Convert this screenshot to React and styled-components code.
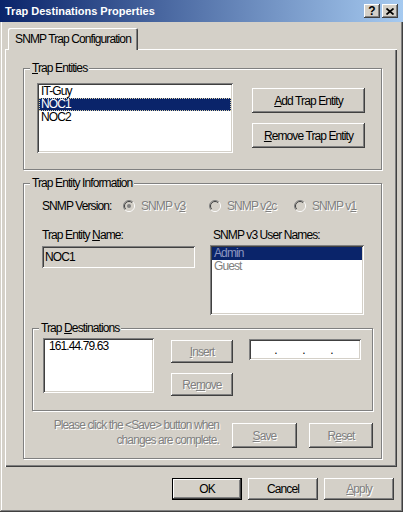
import React from 'react'
import styled, { createGlobalStyle, css } from 'styled-components'

const FACE = '#d4d0c8'

const GlobalStyle = createGlobalStyle`
  html, body {
    margin: 0;
    padding: 0;
    background: ${FACE};
  }
  body {
    font-family: "Liberation Sans", Arial, sans-serif;
    font-size: 12px;
    letter-spacing: -0.9px;
    line-height: 14px;
    white-space: nowrap;
    color: #000;
  }
`

//============ classic 3d edges
const raised = css`
  box-shadow: inset -1px -1px #404040, inset 1px 1px #fff,
    inset -2px -2px #808080, inset 2px 2px ${FACE};
`
const sunken = css`
  box-shadow: inset 1px 1px #808080, inset -1px -1px #fff,
    inset 2px 2px #404040, inset -2px -2px ${FACE};
`
const disabledText = css`
  color: #808080;
  text-shadow: 1px 1px #fff;
`

function Radio({ checked, children }) {
  return (
    <RadioItem>
      <svg width="12" height="12" viewBox="0 0 12 12">
        <circle cx="6" cy="6" r="5" fill={FACE} />
        <path d="M2.1 9.9 A5.5 5.5 0 0 1 9.9 2.1" stroke="#808080" fill="none" />
        <path d="M9.9 2.1 A5.5 5.5 0 0 1 2.1 9.9" stroke="#fff" fill="none" />
        <path d="M2.8 9.2 A4.5 4.5 0 0 1 9.2 2.8" stroke="#404040" fill="none" />
        <path d="M9.2 2.8 A4.5 4.5 0 0 1 2.8 9.2" stroke={FACE} fill="none" />
        {checked && <circle cx="6" cy="6" r="2" fill="#808080" />}
      </svg>
      <span>{children}</span>
    </RadioItem>
  )
}

function App() {
  return (
    <>
      <GlobalStyle />
      <Window>
        <TitleBar>
          <Title>Trap Destinations Properties</Title>
          <CaptionButton>?</CaptionButton>
          <CaptionButton $gap={2}>
            <svg width="8" height="7" viewBox="0 0 8 7">
              <path d="M0.5 0.5 L7.5 6.5 M7.5 0.5 L0.5 6.5" stroke="#000" strokeWidth="1.7" />
            </svg>
          </CaptionButton>
        </TitleBar>

        <Body>
          <TabStrip>
            <Tab>SNMP Trap Configuration</Tab>
          </TabStrip>
          <Panel>
            <Group>
              <GroupTitle><u>T</u>rap Entities</GroupTitle>
              <EntitiesRow>
                <ListBox $w={196} $h={70}>
                  <ListItem>IT-Guy</ListItem>
                  <ListItem $selected $focus>NOC1</ListItem>
                  <ListItem>NOC2</ListItem>
                </ListBox>
                <ButtonColumn $left={19} $top={5}>
                  <Button $w={113} $h={25}><u>A</u>dd Trap Entity</Button>
                  <Button $w={113} $h={25}><u>R</u>emove Trap Entity</Button>
                </ButtonColumn>
              </EntitiesRow>
            </Group>

            <Group $top={13}>
              <GroupTitle>Trap Entity Information</GroupTitle>
              <VersionRow>
                <span>SNMP Version:</span>
                <Radio checked>SNMP v<u>3</u></Radio>
                <Radio>SNMP v<u>2</u>c</Radio>
                <Radio>SNMP v<u>1</u></Radio>
              </VersionRow>

              <FieldsRow>
                <Column $w={153}>
                  <span>Trap Entity <u>N</u>ame:</span>
                  <TextField>NOC1</TextField>
                </Column>
                <Column $w={154}>
                  <FieldLabel>SNMP v3 User Names:</FieldLabel>
                  <ListBox $w={154} $h={70} $top={3}>
                    <ListItem $selected $dim>Admin</ListItem>
                    <ListItem $dim>Guest</ListItem>
                  </ListBox>
                </Column>
              </FieldsRow>

              <Group $top={13} $side={8}>
                <GroupTitle>Trap <u>D</u>estinations</GroupTitle>
                <DestRow>
                  <ListBox $w={111} $h={55}>
                    <ListItem $pad={4}>161.44.79.63</ListItem>
                  </ListBox>
                  <ButtonColumn $left={17} $top={2}>
                    <Button $w={62} $h={23} disabled><u>I</u>nsert</Button>
                    <Button $w={62} $h={23} disabled>Re<u>m</u>ove</Button>
                  </ButtonColumn>
                  <IpField>
                    <Dot>.</Dot>
                    <Dot>.</Dot>
                    <Dot>.</Dot>
                  </IpField>
                </DestRow>
              </Group>

              <SaveRow>
                <Note>
                  Please click the &lt;Save&gt; button when<br />
                  changes are complete.
                </Note>
                <Button $w={65} $h={25} disabled><u>S</u>ave</Button>
                <Button $w={64} $h={25} disabled $left={12}>R<u>e</u>set</Button>
              </SaveRow>
            </Group>
          </Panel>

          <Footer>
            <Button $w={70} $h={22} $default>OK</Button>
            <Button $w={70} $h={22}>Cancel</Button>
            <Button $w={70} $h={22} disabled><u>A</u>pply</Button>
          </Footer>
        </Body>
      </Window>
    </>
  )
}

export default App

//============ window frame

const Window = styled.div`
  width: 403px;
  height: 512px;
  box-sizing: border-box;
  background: ${FACE};
  display: flex;
  flex-direction: column;
  box-shadow: inset -1px -1px #404040, inset 1px 1px ${FACE},
    inset -2px -2px #808080, inset 2px 2px #fff;
`

const TitleBar = styled.div`
  height: 22px;
  flex-shrink: 0;
  display: flex;
  align-items: center;
  padding: 0 5px;
  background: linear-gradient(to right, #0a246a, #a6caf0);
  color: #fff;
  font-size: 11px;
  font-weight: bold;
  letter-spacing: 0;
`

const Title = styled.div`
  flex: 1;
`

const CaptionButton = styled.div`
  width: 16px;
  height: 14px;
  margin-left: ${p => p.$gap || 0}px;
  display: flex;
  align-items: center;
  justify-content: center;
  background: ${FACE};
  color: #000;
  font-size: 12px;
  font-weight: bold;
  letter-spacing: 0;
  ${raised}
`

const Body = styled.div`
  flex: 1;
  display: flex;
  flex-direction: column;
  padding: 6px 6px 0 5px;
`

const TabStrip = styled.div`
  display: flex;
  height: 21px;
  padding-left: 3px;
  position: relative;
  z-index: 1;
`

const Tab = styled.div`
  width: 130px;
  height: 22px;
  box-sizing: border-box;
  padding-top: 4px;
  text-align: center;
  background: ${FACE};
  border-radius: 2px 2px 0 0;
  box-shadow: inset 1px 1px #fff, inset -1px 0 #404040, inset -2px 0 #808080;
`

const Panel = styled.div`
  height: 418px;
  box-sizing: border-box;
  padding: 19px 15px 0 18px;
  display: flex;
  flex-direction: column;
  box-shadow: inset 1px 1px #fff, inset -1px -1px #404040, inset -2px -2px #808080;
`

//============ group boxes

const Group = styled.div`
  margin: ${p => p.$top || 0}px ${p => p.$side || 0}px 0;
  border: 1px solid #808080;
  box-shadow: inset 1px 1px #fff, 1px 1px #fff;
  display: flex;
  flex-direction: column;
`

const GroupTitle = styled.div`
  align-self: flex-start;
  margin: -8px 0 0 6px;
  padding: 0 2px;
  background: ${FACE};
`

const EntitiesRow = styled.div`
  display: flex;
  align-items: flex-start;
  padding: 8px 0 16px 13px;
`

const ButtonColumn = styled.div`
  display: flex;
  flex-direction: column;
  gap: 10px;
  margin: ${p => p.$top}px 0 0 ${p => p.$left}px;
`

const VersionRow = styled.div`
  display: grid;
  grid-template-columns: 81px 86px 85px auto;
  align-items: center;
  margin-top: 9px;
  padding-left: 18px;
`

const RadioItem = styled.label`
  display: flex;
  align-items: center;
  gap: 6px;
  ${disabledText}
`

const FieldsRow = styled.div`
  display: flex;
  gap: 15px;
  margin-top: 15px;
  padding-left: 18px;
`

const Column = styled.div`
  width: ${p => p.$w}px;
  display: flex;
  flex-direction: column;
`

const FieldLabel = styled.span`
  padding-left: 3px;
`

const TextField = styled.div`
  height: 22px;
  margin-top: 4px;
  box-sizing: border-box;
  padding: 4px 3px 0;
  background: ${FACE};
  ${sunken}
`

const DestRow = styled.div`
  display: flex;
  align-items: flex-start;
  padding: 3px 0 14px 10px;
`

const IpField = styled.div`
  width: 112px;
  height: 21px;
  margin: 1px 0 0 16px;
  box-sizing: border-box;
  display: flex;
  gap: 25px;
  padding: 4px 0 0 25px;
  background: #fff;
  ${sunken}
`

const Dot = styled.span`
  width: 3px;
  text-align: center;
`

const SaveRow = styled.div`
  display: flex;
  justify-content: flex-end;
  align-items: flex-start;
  margin-top: 12px;
  padding: 0 8px 10px 0;
`

const Note = styled.div`
  margin: -5px 13px 0 0;
  line-height: 15px;
  text-align: right;
  ${disabledText}
`

const Footer = styled.div`
  display: flex;
  justify-content: flex-end;
  gap: 6px;
  padding: 11px 3px 0 0;
`

//============ controls

const ListBox = styled.div`
  width: ${p => p.$w}px;
  height: ${p => p.$h}px;
  margin-top: ${p => p.$top || 0}px;
  flex-shrink: 0;
  box-sizing: border-box;
  padding: 2px;
  background: #fff;
  ${sunken}
`

const ListItem = styled.div`
  height: 13px;
  line-height: 13px;
  padding-left: ${p => p.$pad || 2}px;
  ${p => p.$dim && 'color: #808080;'}
  ${p => p.$selected && css`
    background: #0a246a;
    color: ${p.$dim ? '#8c96c0' : '#fff'};
  `}
  ${p => p.$focus && 'outline: 1px dotted #d8d0a8; outline-offset: -1px;'}
`

const Button = styled.button`
  width: ${p => p.$w}px;
  height: ${p => p.$h}px;
  margin-left: ${p => p.$left || 0}px;
  flex-shrink: 0;
  padding: 0;
  border: none;
  background: ${FACE};
  font: inherit;
  letter-spacing: inherit;
  color: #000;
  ${raised}
  ${p => p.disabled && disabledText}
  ${p => p.$default && css`
    box-shadow: inset 0 0 0 1px #000, inset -2px -2px #404040,
      inset 2px 2px #fff, inset -3px -3px #808080;
  `}
`
